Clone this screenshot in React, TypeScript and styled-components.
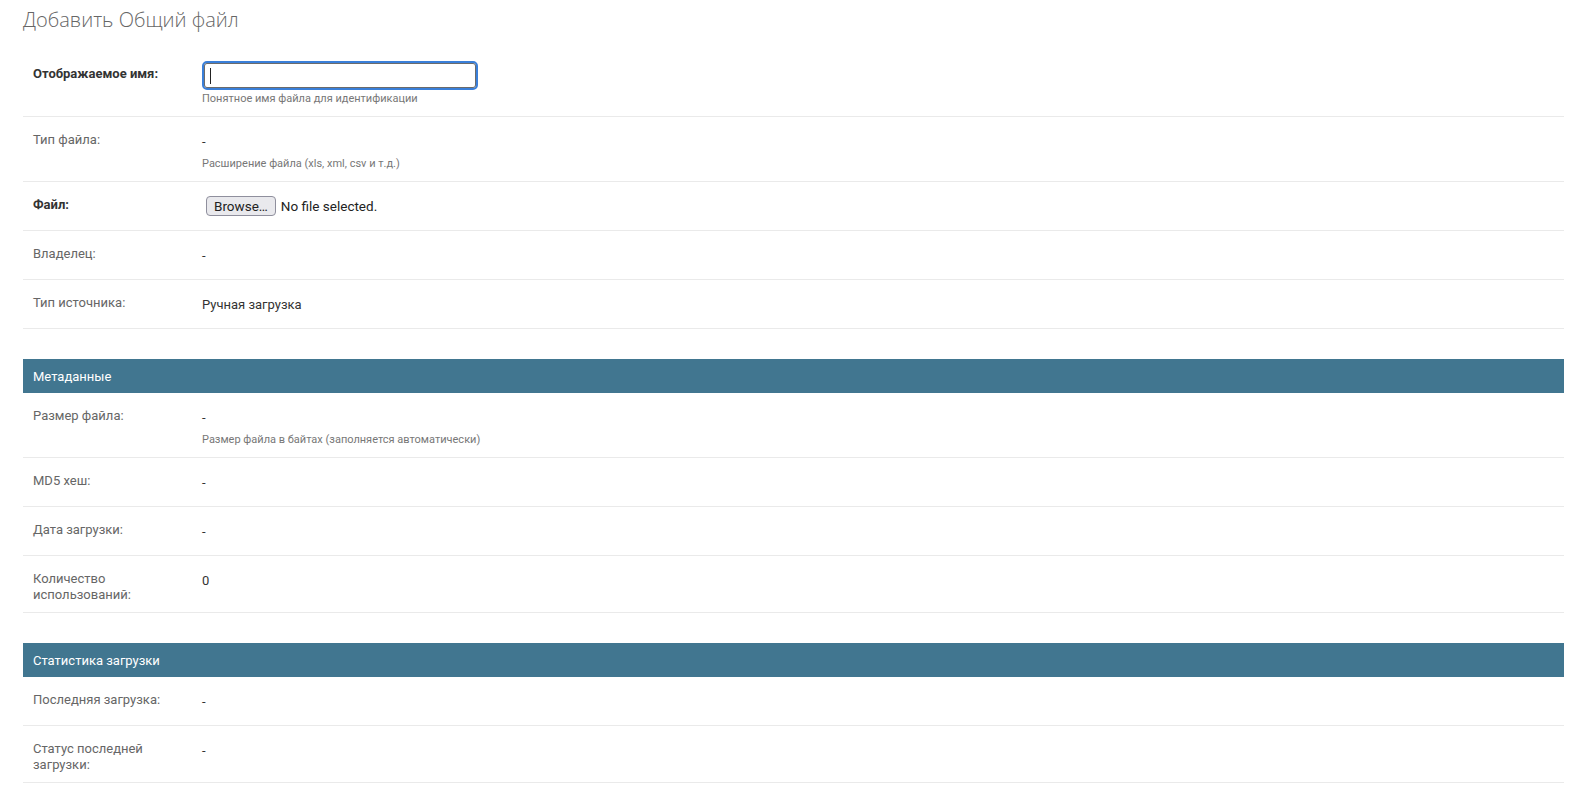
import React from "react";
import styled, { createGlobalStyle } from "styled-components";

const Global = createGlobalStyle`
  html, body { margin: 0; padding: 0; background: #fff; }
  body { font-family: Roboto, "Open Sans", sans-serif; color: #333; }
`;

const Content = styled.div`
  padding: 8px 10px 0 23px;
`;

const Title = styled.h1`
  margin: 0 0 19px;
  font-family: "Open Sans", Roboto, sans-serif;
  font-size: 20px;
  line-height: 24px;
  font-weight: 300;
  color: #666;
`;

const Fieldset = styled.section`
  margin: 0 0 30px;
`;

const Legend = styled.h2`
  margin: 0;
  padding: 8px 10px;
  background: #417690;
  color: #fff;
  font-size: 13px;
  line-height: 19px;
  font-weight: 400;
  height: 18px;
`;

const Row = styled.div`
  display: flex;
  align-items: flex-start;
  padding: 10px;
  border-bottom: 1px solid #eaeaea;
  font-size: 13px;
`;

const Label = styled.label<{ $required?: boolean }>`
  flex: 0 0 159px;
  padding: 5px 10px 0 0;
  line-height: 15.5px;
  color: ${(p) => (p.$required ? "#333" : "#666")};
  font-weight: ${(p) => (p.$required ? 700 : 400)};
`;

const Field = styled.div`
  display: flex;
  flex-direction: column;
`;

const Readonly = styled.div`
  padding: 7px 0 5px;
  line-height: 16px;
  color: #333;
`;

const Help = styled.div`
  margin-top: 2px;
  font-size: 11px;
  line-height: 14px;
  color: #777;
`;

const InputWrap = styled.div`
  position: relative;
  width: 276px;
  height: 29px;
  box-sizing: border-box;
  border: 2px solid #3a7fd9;
  border-radius: 5px;
  box-shadow: inset 0 0 0 1px #6b6b6b;
  background: #fff;
`;

const Input = styled.input`
  width: 100%;
  height: 100%;
  box-sizing: border-box;
  border: 0;
  outline: none;
  background: transparent;
  padding: 0 6px;
  font: inherit;
  font-size: 13px;
`;

const Caret = styled.span`
  position: absolute;
  left: 6px;
  top: 5px;
  width: 1px;
  height: 16px;
  background: #222;
`;

const FileRow = styled.div`
  display: flex;
  align-items: center;
  height: 28px;
  gap: 5px;
  padding-left: 4px;
`;

const BrowseButton = styled.button`
  height: 20px;
  padding: 0 7px;
  box-sizing: border-box;
  border: 1px solid #8f8f9d;
  border-radius: 4px;
  background: #e9e9ed;
  color: #222;
  font-family: inherit;
  font-size: 13.5px;
  line-height: 18px;
`;

const FileText = styled.span`
  font-size: 13.5px;
  color: #222;
`;

type R = { label: string; value: string; help?: string };

const ReadRow = ({ label, value, help }: R) => (
  <Row>
    <Label>{label}</Label>
    <Field>
      <Readonly>{value}</Readonly>
      {help && <Help>{help}</Help>}
    </Field>
  </Row>
);

const meta: R[] = [
  { label: "Размер файла:", value: "-", help: "Размер файла в байтах (заполняется автоматически)" },
  { label: "MD5 хеш:", value: "-" },
  { label: "Дата загрузки:", value: "-" },
  { label: "Количество использований:", value: "0" },
];

const stats: R[] = [
  { label: "Последняя загрузка:", value: "-" },
  { label: "Статус последней загрузки:", value: "-" },
];

export default function App() {
  return (
    <Content>
      <Global />
      <Title>Добавить Общий файл</Title>
      <Fieldset>
        <Row>
          <Label $required>Отображаемое имя:</Label>
          <Field>
            <InputWrap>
              <Input type="text" />
              <Caret />
            </InputWrap>
            <Help>Понятное имя файла для идентификации</Help>
          </Field>
        </Row>
        <ReadRow label="Тип файла:" value="-" help="Расширение файла (xls, xml, csv и т.д.)" />
        <Row>
          <Label $required>Файл:</Label>
          <FileRow>
            <BrowseButton type="button">Browse…</BrowseButton>
            <FileText>No file selected.</FileText>
          </FileRow>
        </Row>
        <ReadRow label="Владелец:" value="-" />
        <ReadRow label="Тип источника:" value="Ручная загрузка" />
      </Fieldset>
      <Fieldset>
        <Legend>Метаданные</Legend>
        {meta.map((r) => (
          <ReadRow key={r.label} {...r} />
        ))}
      </Fieldset>
      <Fieldset>
        <Legend>Статистика загрузки</Legend>
        {stats.map((r) => (
          <ReadRow key={r.label} {...r} />
        ))}
      </Fieldset>
    </Content>
  );
}
